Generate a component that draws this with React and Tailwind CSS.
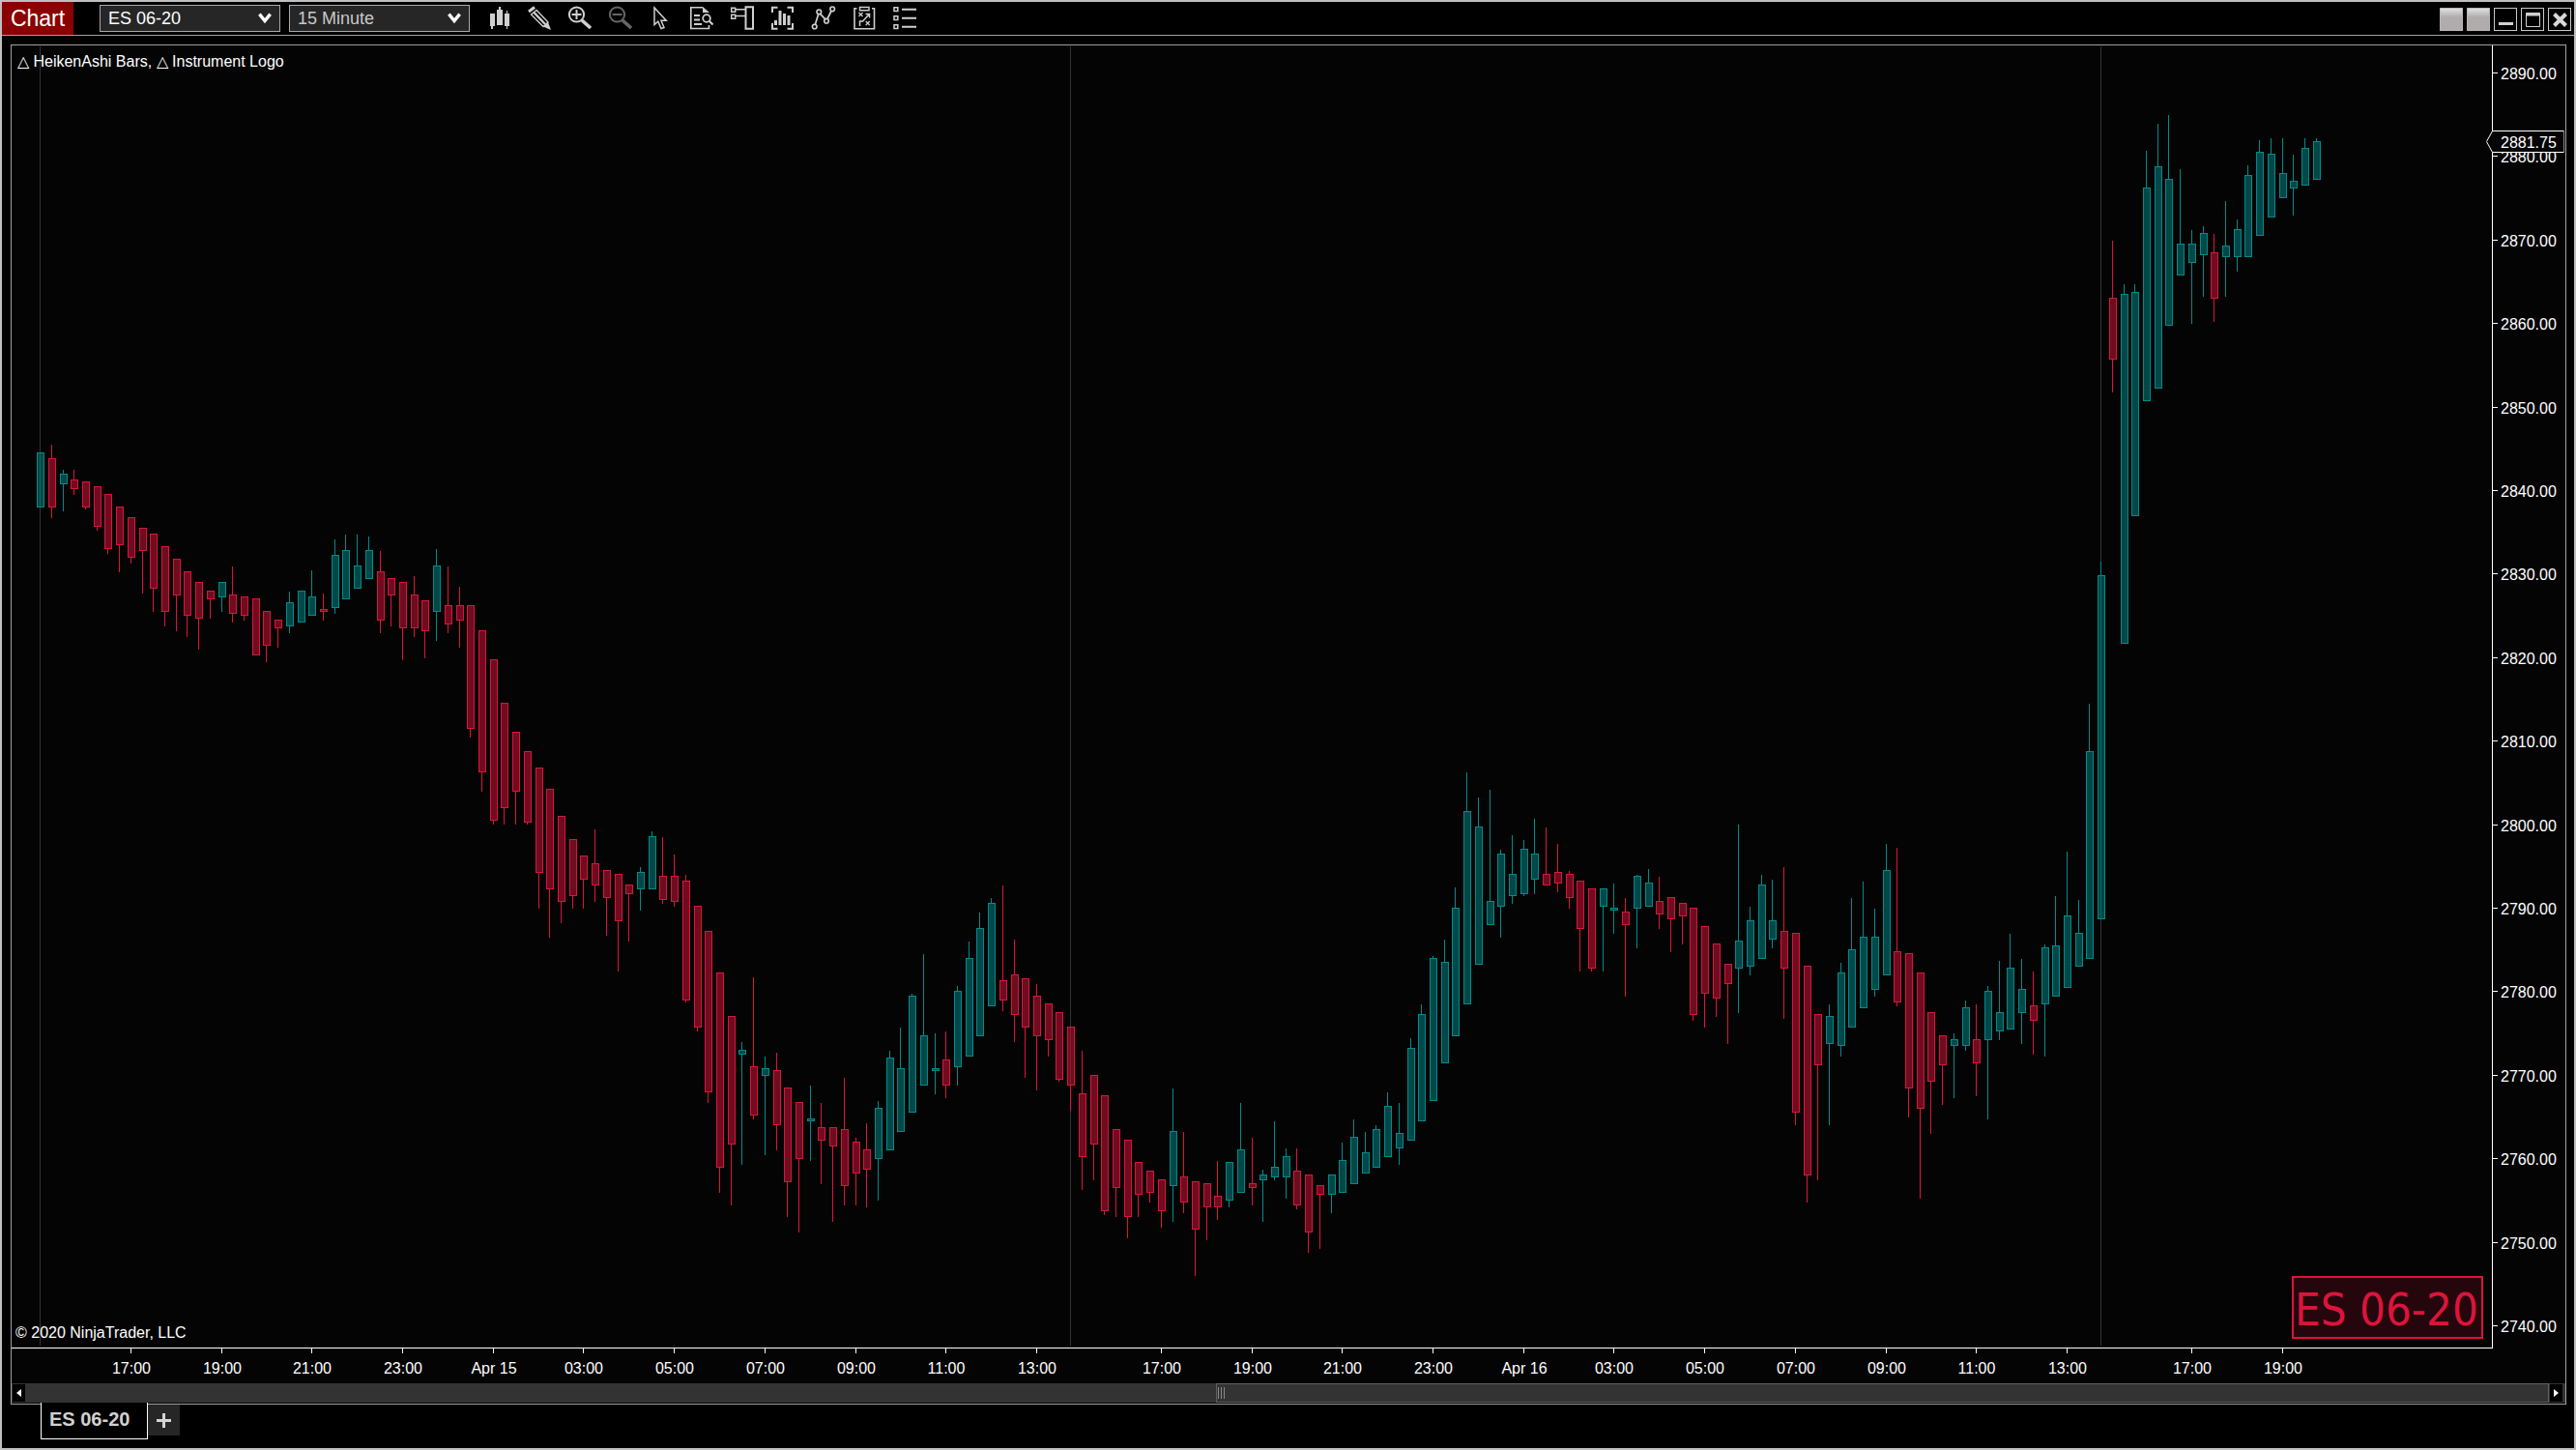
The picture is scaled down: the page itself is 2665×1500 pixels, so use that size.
import React, { useState } from "react";

// plot geometry, in chart units
const FIRST_X = 38.15;
const STEP = 11.7145;
const UP = "#008b8b";
const DOWN = "#dc143c";

// [direction, high, body top, body bottom, low]
const BARS = [
  ["u", 468, 468, 525, 525], ["d", 460, 474, 525, 536], ["u", 486, 490, 501, 529], ["d", 486, 496, 506, 512],
  ["d", 498, 498, 525, 527], ["d", 503, 503, 545, 549], ["d", 511, 511, 568, 573], ["d", 524, 524, 564, 592],
  ["d", 535, 535, 577, 583], ["d", 546, 546, 570, 614], ["d", 552, 552, 609, 633], ["d", 565, 565, 633, 648],
  ["d", 578, 578, 616, 653], ["d", 591, 591, 637, 659], ["d", 602, 602, 640, 672], ["d", 611, 611, 620, 640],
  ["u", 602, 602, 618, 633], ["d", 586, 615, 635, 644], ["d", 617, 617, 637, 642], ["d", 619, 619, 678, 678],
  ["d", 632, 632, 668, 685], ["d", 641, 641, 650, 670], ["u", 612, 623, 648, 655], ["u", 611, 611, 644, 644],
  ["u", 590, 617, 637, 637], ["d", 614, 630, 633, 642], ["u", 558, 574, 629, 635], ["u", 553, 569, 620, 620],
  ["u", 553, 585, 609, 609], ["u", 555, 569, 599, 599], ["d", 570, 591, 642, 655], ["d", 598, 598, 616, 648],
  ["d", 602, 602, 650, 683], ["d", 596, 615, 650, 659], ["d", 621, 621, 653, 681], ["u", 568, 585, 633, 663],
  ["d", 586, 626, 646, 655], ["d", 607, 626, 642, 670], ["d", 626, 626, 754, 763], ["d", 652, 652, 799, 819],
  ["d", 682, 682, 849, 853], ["d", 727, 727, 836, 853], ["d", 757, 757, 819, 853], ["d", 777, 777, 851, 853],
  ["d", 794, 794, 903, 940], ["d", 816, 816, 920, 970], ["d", 844, 844, 933, 955], ["d", 868, 868, 927, 940],
  ["d", 885, 885, 910, 940], ["d", 858, 893, 916, 933], ["d", 900, 900, 929, 968], ["d", 904, 904, 953, 1005],
  ["d", 915, 915, 925, 974], ["u", 897, 902, 920, 942], ["u", 860, 865, 920, 920], ["d", 866, 906, 931, 935],
  ["d", 884, 906, 933, 938], ["d", 905, 911, 1035, 1037], ["d", 937, 937, 1063, 1067], ["d", 963, 963, 1130, 1141],
  ["d", 1006, 1006, 1208, 1234], ["d", 1051, 1051, 1184, 1247], ["u", 1078, 1086, 1091, 1205], ["d", 1011, 1103, 1154, 1158],
  ["u", 1093, 1105, 1113, 1195], ["d", 1089, 1107, 1164, 1190], ["d", 1125, 1125, 1223, 1259], ["d", 1140, 1140, 1199, 1275],
  ["u", 1123, 1157, 1160, 1201], ["d", 1141, 1166, 1180, 1225], ["d", 1166, 1166, 1186, 1264], ["d", 1115, 1168, 1227, 1247],
  ["d", 1177, 1181, 1214, 1247], ["d", 1162, 1189, 1210, 1249], ["u", 1139, 1146, 1199, 1242], ["u", 1087, 1094, 1190, 1190],
  ["u", 1063, 1105, 1171, 1171], ["u", 1028, 1030, 1151, 1151], ["u", 987, 1071, 1123, 1123], ["u", 1069, 1105, 1108, 1132],
  ["d", 1067, 1096, 1123, 1136], ["u", 1020, 1025, 1104, 1123], ["u", 974, 991, 1093, 1093], ["u", 944, 960, 1072, 1072],
  ["u", 929, 934, 1041, 1041], ["d", 916, 1014, 1035, 1046], ["d", 972, 1008, 1050, 1078], ["d", 1012, 1012, 1063, 1115],
  ["d", 1018, 1030, 1072, 1128], ["d", 1038, 1038, 1076, 1093], ["d", 1047, 1047, 1117, 1119], ["d", 1062, 1062, 1123, 1149],
  ["d", 1087, 1131, 1197, 1231], ["d", 1112, 1112, 1184, 1221], ["d", 1133, 1133, 1253, 1257], ["d", 1168, 1168, 1229, 1259],
  ["d", 1179, 1179, 1259, 1281], ["d", 1202, 1202, 1236, 1259], ["d", 1211, 1211, 1234, 1244], ["d", 1220, 1220, 1253, 1270],
  ["u", 1126, 1170, 1227, 1264], ["d", 1171, 1217, 1244, 1255], ["d", 1222, 1222, 1272, 1320], ["d", 1224, 1224, 1249, 1283],
  ["d", 1201, 1237, 1249, 1262], ["u", 1202, 1202, 1242, 1249], ["u", 1141, 1189, 1234, 1234], ["d", 1177, 1224, 1229, 1247],
  ["u", 1210, 1215, 1221, 1264], ["u", 1160, 1207, 1218, 1221], ["u", 1188, 1196, 1218, 1240], ["d", 1188, 1211, 1247, 1251],
  ["d", 1215, 1215, 1275, 1296], ["d", 1226, 1226, 1236, 1292], ["u", 1215, 1215, 1236, 1255], ["u", 1182, 1200, 1234, 1234],
  ["u", 1158, 1176, 1225, 1225], ["u", 1171, 1192, 1214, 1214], ["u", 1164, 1168, 1208, 1208], ["u", 1130, 1144, 1197, 1197],
  ["u", 1141, 1172, 1188, 1205], ["u", 1074, 1084, 1180, 1180], ["u", 1039, 1049, 1160, 1160], ["u", 989, 991, 1139, 1139],
  ["u", 972, 995, 1100, 1100], ["u", 918, 939, 1072, 1072], ["u", 799, 839, 1039, 1039], ["u", 825, 855, 998, 998],
  ["u", 817, 932, 957, 957], ["u", 879, 883, 938, 970], ["u", 864, 904, 927, 935], ["u", 869, 878, 925, 927],
  ["u", 847, 883, 910, 925], ["d", 856, 904, 916, 916], ["d", 873, 902, 914, 923], ["d", 901, 904, 929, 940],
  ["d", 911, 911, 961, 1005], ["d", 919, 919, 1002, 1005], ["u", 919, 919, 938, 1005], ["u", 914, 939, 942, 966],
  ["d", 929, 943, 957, 1031], ["u", 905, 906, 940, 981], ["u", 899, 913, 938, 938], ["d", 907, 932, 946, 961],
  ["d", 928, 928, 951, 985], ["d", 934, 934, 948, 977], ["d", 939, 939, 1050, 1056], ["d", 958, 958, 1028, 1063],
  ["d", 976, 976, 1033, 1052], ["d", 997, 997, 1018, 1080], ["u", 853, 973, 1002, 1048], ["u", 938, 952, 1000, 1009],
  ["u", 905, 915, 992, 992], ["u", 910, 952, 972, 981], ["d", 897, 963, 1002, 1054], ["d", 965, 965, 1151, 1164],
  ["d", 999, 999, 1216, 1244], ["d", 1049, 1049, 1102, 1221], ["u", 1039, 1051, 1080, 1164], ["u", 996, 1006, 1082, 1093],
  ["u", 929, 982, 1063, 1063], ["u", 912, 969, 1043, 1043], ["u", 940, 969, 1024, 1031], ["u", 873, 900, 1009, 1009],
  ["d", 877, 984, 1037, 1041], ["d", 986, 986, 1126, 1156], ["d", 1006, 1006, 1147, 1240], ["d", 1047, 1047, 1119, 1173],
  ["d", 1071, 1071, 1102, 1143], ["u", 1069, 1075, 1082, 1136], ["u", 1035, 1042, 1082, 1087], ["d", 1039, 1075, 1100, 1134],
  ["u", 1020, 1025, 1076, 1158], ["u", 994, 1047, 1067, 1076], ["u", 966, 1001, 1065, 1065], ["u", 992, 1023, 1048, 1080],
  ["d", 1005, 1040, 1056, 1091], ["u", 977, 980, 1039, 1093], ["u", 927, 978, 1031, 1031], ["u", 881, 947, 1022, 1022],
  ["u", 931, 965, 1000, 1000], ["u", 728, 777, 992, 992], ["u", 581, 595, 951, 951], ["d", 249, 308, 372, 406],
  ["u", 294, 304, 666, 666], ["u", 294, 302, 534, 534], ["u", 156, 194, 415, 415], ["u", 128, 172, 402, 402],
  ["u", 119, 185, 337, 337], ["u", 175, 252, 285, 285], ["u", 238, 252, 272, 335], ["u", 234, 241, 264, 307],
  ["d", 242, 261, 309, 333], ["u", 208, 254, 266, 307], ["u", 227, 237, 266, 281], ["u", 171, 181, 266, 266],
  ["u", 145, 157, 244, 244], ["u", 143, 159, 225, 225], ["u", 143, 179, 205, 205], ["u", 160, 187, 195, 223],
  ["u", 143, 153, 192, 192], ["u", 143, 146, 186, 186],
];

const SESSIONS = [0, 91, 182];

// [bar index, label]
const TIMES = [
  [8, "17:00"], [16, "19:00"], [24, "21:00"], [32, "23:00"], [40, "Apr 15"], [48, "03:00"],
  [56, "05:00"], [64, "07:00"], [72, "09:00"], [80, "11:00"], [88, "13:00"],
  [99, "17:00"], [107, "19:00"], [115, "21:00"], [123, "23:00"], [131, "Apr 16"], [139, "03:00"],
  [147, "05:00"], [155, "07:00"], [163, "09:00"], [171, "11:00"], [179, "13:00"],
  [190, "17:00"], [198, "19:00"],
];

const PRICES = Array.from({ length: 16 }, (_, i) => 2890 - i * 10);

const barX = (i) => Math.round(FIRST_X + i * STEP);
const priceY = (p) => Math.round(75 + (2890 - p) * 8.64);

function Bar({ i, bar }) {
  const [dir, high, top, bottom, low] = bar;
  const color = dir === "u" ? UP : DOWN;
  const x = barX(i);
  return (
    <g>
      {high < top && <rect x={x + 3} y={high} width="1" height={top - high} fill={color} />}
      {low > bottom && <rect x={x + 3} y={bottom} width="1" height={low - bottom} fill={color} />}
      <rect
        x={x + 0.5}
        y={top + 0.5}
        width="7"
        height={bottom - top - 1}
        fill={color}
        fillOpacity="0.5"
        stroke={color}
      />
    </g>
  );
}

function Chart() {
  return (
    <svg
      viewBox="12 47 2642 1384"
      className="block w-full flex-1 min-h-0 bg-[#040404] text-[16px]"
      fill="#ffffff"
      shapeRendering="crispEdges"
      role="img"
      aria-label="ES 06-20 15 minute chart"
    >
      {SESSIONS.map((i) => (
        <rect key={i} x={barX(i) + 3} y="48" width="1" height="1344" fill="#333333" />
      ))}

      {BARS.map((bar, i) => (
        <Bar key={i} i={i} bar={bar} />
      ))}

      <text x="18" y="69">△ HeikenAshi Bars, △ Instrument Logo</text>
      <text x="16" y="1384">© 2020 NinjaTrader, LLC</text>

      {/* axes */}
      <rect x="2578" y="47" width="1" height="1348" />
      <rect x="12" y="1394" width="2567" height="1" />
      {PRICES.map((p) => (
        <g key={p}>
          <rect x="2579" y={priceY(p)} width="5" height="1" />
          <text x="2587" y={priceY(p) + 7}>{p.toFixed(2)}</text>
        </g>
      ))}
      {TIMES.map(([i, label]) => (
        <g key={i}>
          <rect x={barX(i) + 3} y="1395" width="1" height="5" />
          <text x={barX(i) + 4} y="1421" textAnchor="middle">{label}</text>
        </g>
      ))}

      {/* last price marker */}
      <path
        d="M2578.5 135.5H2652.5V157.5H2578.5L2572.5 146.5Z"
        fill="#040404"
        stroke="#ffffff"
        shapeRendering="auto"
      />
      <path d="M2652.5 135V158" stroke="#8a8a8a" />
      <text x="2587" y="153">2881.75</text>

      {/* instrument logo */}
      <rect x="2372" y="1321" width="196" height="63" fill="#25060c" stroke={DOWN} strokeWidth="2" />
      <text
        x="2374"
        y="1371"
        fill={DOWN}
        className="font-['DejaVu_Sans_Condensed','Noto_Sans',sans-serif] text-[47px]"
      >
        ES 06-20
      </text>
    </svg>
  );
}

const TOOLS = [
  {
    name: "Chart style",
    icon: (
      <g fill="currentColor" stroke="none">
        <path d="M4 8h5v13H7v3H5v-3H4zM11 4h2V1h2v3h2v16h-6zM19 8h2V5h1v3h2v13h-2v3h-1v-3h-2z" />
      </g>
    ),
  },
  {
    name: "Drawing tools",
    icon: (
      <>
        <path d="M2 6L8 1.5" strokeWidth="3" />
        <path d="M4.5 9L10 4.5L22 17L17 21.5Z" strokeWidth="1.3" />
        <path d="M7.5 7L19 19" strokeWidth="2.4" />
        <path d="M17 21.5L22 17L25 25Z" fill="currentColor" stroke="none" />
      </>
    ),
  },
  {
    name: "Zoom in",
    icon: (
      <>
        <circle cx="9.5" cy="9" r="7.6" />
        <path d="M9.5 4v10M4.5 9h10" />
        <path d="M15 15L24 23" strokeWidth="3.6" />
      </>
    ),
  },
  {
    name: "Zoom out",
    dim: true,
    icon: (
      <>
        <circle cx="9.5" cy="9" r="7.6" />
        <path d="M4.5 9h10" />
        <path d="M15 15L24 23" strokeWidth="3.6" />
      </>
    ),
  },
  {
    name: "Cursor",
    icon: <path d="M6 2V19.5L9.8 16.2L13 23.5L16 22.5L13 15.2H18.2Z" strokeWidth="1.5" />,
  },
  {
    name: "Data box",
    icon: (
      <>
        <path d="M20.5 20v3.5H1.8V1.8H14" strokeWidth="1.6" />
        <path d="M14 1v6h7z" fill="currentColor" stroke="none" />
        <path d="M5 10h6M5 14.5h6M5 19h8" />
        <circle cx="18" cy="13" r="3.8" strokeWidth="1.8" />
        <path d="M20.5 15.5l4 4" strokeWidth="2.2" />
      </>
    ),
  },
  {
    name: "Chart trader",
    icon: (
      <>
        <path d="M1.7 2.2h4v4h-4zM1.7 9.2h4v4h-4zM6 3.7h10M6 10.5h10" strokeWidth="1.5" />
        <path d="M16.5 1.2h7.5v22.5h-7.5z" />
      </>
    ),
  },
  {
    name: "Fit to screen",
    icon: (
      <>
        <path d="M7.5 1.7H2V7M17.5 1.7H23V7M7.5 23.7H2V18M17.5 23.7H23V18" />
        <path d="M5.5 15v5M10 5v15M14.5 8v12M19 10v10" strokeWidth="3" />
      </>
    ),
  },
  {
    name: "Indicators",
    icon: (
      <>
        <path d="M4.3 19.5L7.7 8.5M9.5 8.3L14.8 13.8M17 13.5L21.2 5" strokeWidth="1.7" />
        <circle cx="3.7" cy="21.5" r="2.3" strokeWidth="1.6" />
        <circle cx="8.3" cy="6.3" r="2.3" strokeWidth="1.6" />
        <circle cx="16" cy="15.7" r="2.3" strokeWidth="1.6" />
        <circle cx="22.2" cy="3.3" r="2.3" strokeWidth="1.6" />
      </>
    ),
  },
  {
    name: "Strategies",
    icon: (
      <>
        <path d="M5.5 2.7H3v21h20.5v-21H21" strokeWidth="1.6" />
        <path d="M8.5 1.5h9.5v3.2H8.5z" strokeWidth="1.4" />
        <path d="M7.5 7l4 4M11.5 7l-4 4M14.7 16l4 4M18.7 16l-4 4" strokeWidth="1.3" />
        <path d="M8.5 21v-5h3L18 9M14.5 8.5h4v4" strokeWidth="1.5" />
      </>
    ),
  },
  {
    name: "Properties",
    icon: (
      <>
        <path d="M2 1.8h3.8v3.8H2zM2 10.7h3.8v3.8H2zM2 19.7h3.8v3.8H2z" strokeWidth="1.5" />
        <path d="M10 3.8h15M10 12.7h15M10 21.7h15" />
      </>
    ),
  },
];

function Picker({ label, value, onChange, options, className }) {
  return (
    <div className="relative">
      <select
        aria-label={label}
        value={value}
        onChange={(e) => onChange(e.target.value)}
        className={
          "block w-[187px] h-7 appearance-none border border-[#a9a9a9] bg-[#262626] pl-2 text-[18px] leading-6 " +
          className
        }
      >
        {options.map((o) => (
          <option key={o}>{o}</option>
        ))}
      </select>
      <svg
        viewBox="0 0 14 12"
        className="absolute right-[9px] top-2 w-[14px] h-3 pointer-events-none"
        fill="none"
        stroke="#ffffff"
        strokeWidth="3.4"
      >
        <path d="M1.4 1.6L7 8.6L12.6 1.6" />
      </svg>
    </div>
  );
}

function WindowButtons() {
  const base = "w-6 h-6 border border-[#c8c8c8] flex items-center justify-center";
  return (
    <div className="ml-auto flex gap-1 pr-[3px] pt-px">
      <button type="button" aria-label="Link instrument" className="w-6 h-6 border border-[#b5b5bb] bg-linear-to-b from-[#e0e0e0] to-[#b0acac] to-40%" />
      <button type="button" aria-label="Link interval" className="w-6 h-6 border border-[#b5b5bb] bg-linear-to-b from-[#e0e0e0] to-[#b0acac] to-40%" />
      <button type="button" aria-label="Minimize" className={base}>
        <svg viewBox="0 0 22 22" className="w-[22px] h-[22px]" fill="#d0d0d0">
          <rect x="4" y="14" width="15" height="3" />
        </svg>
      </button>
      <button type="button" aria-label="Maximize" className={base}>
        <svg viewBox="0 0 22 22" className="w-[22px] h-[22px]" fill="none" stroke="#d0d0d0">
          <path d="M4.5 4.5h14v14h-14z" />
          <path d="M4 6h15" strokeWidth="3" />
        </svg>
      </button>
      <button type="button" aria-label="Close" className={base}>
        <svg viewBox="0 0 22 22" className="w-[22px] h-[22px]" fill="none" stroke="#d8d8d8" strokeWidth="4">
          <path d="M5.5 5.5l12 12M17.5 5.5l-12 12" />
        </svg>
      </button>
    </div>
  );
}

export default function App() {
  const [instrument, setInstrument] = useState("ES 06-20");
  const [interval, setBarInterval] = useState("15 Minute");

  return (
    <div className="h-screen flex flex-col border-2 border-[#bfbfbf] bg-black text-white font-['Liberation_Sans',Arial,sans-serif]">
      <header className="flex h-[35px] shrink-0 items-center border-b border-[#a0a0a0]">
        <h1 className="flex h-full w-[74px] items-center justify-center bg-[#8b0000] text-[23px] leading-none">
          Chart
        </h1>
        <div className="ml-[27px] flex gap-[9px]">
          <Picker
            label="Instrument"
            value={instrument}
            onChange={setInstrument}
            options={["ES 06-20", "NQ 06-20", "YM 06-20"]}
            className="text-white"
          />
          <Picker
            label="Interval"
            value={interval}
            onChange={setBarInterval}
            options={["5 Minute", "15 Minute", "60 Minute"]}
            className="text-[#c8c8c8]"
          />
        </div>
        <div className="ml-[9px] flex">
          {TOOLS.map((t) => (
            <button
              key={t.name}
              type="button"
              aria-label={t.name}
              className={"flex w-[42px] justify-center " + (t.dim ? "text-[#666666]" : "text-[#d0d0d0]")}
            >
              <svg viewBox="0 0 26 26" className="w-[26px] h-[26px]" fill="none" stroke="currentColor" strokeWidth="2">
                {t.icon}
              </svg>
            </button>
          ))}
        </div>
        <WindowButtons />
      </header>

      <main className="mt-[9px] ml-[9px] mr-2 flex min-h-0 flex-1 flex-col border border-[#a0a0a0]">
        <Chart />
        <div className="mb-px flex h-5 shrink-0 bg-[#333333] px-px">
          <button type="button" aria-label="Scroll left" className="my-px flex w-[13px] items-center justify-center bg-black">
            <svg viewBox="0 0 5 8" className="w-[5px] h-2" fill="#ffffff">
              <path d="M5 0v8L0 4z" />
            </svg>
          </button>
          <div className="flex flex-1">
            <div className="w-[47.2%]" />
            <div className="flex flex-1 items-center border border-[#606060] pl-px">
              <div className="flex h-3 w-[7px] justify-center border-x border-[#8a8a8a]">
                <div className="w-px bg-[#8a8a8a]" />
              </div>
            </div>
          </div>
          <button type="button" aria-label="Scroll right" className="my-px ml-px mr-[2px] flex w-[13px] items-center justify-center bg-black">
            <svg viewBox="0 0 5 8" className="w-[5px] h-2" fill="#ffffff">
              <path d="M0 0v8l5-4z" />
            </svg>
          </button>
        </div>
      </main>

      <nav className="flex h-[45px] shrink-0 items-start pl-10">
        <button
          type="button"
          className="relative -mt-[2px] h-[38px] w-[111px] border border-t-0 border-white bg-black pb-1 pl-2 text-left text-[20px] leading-6 font-bold text-[#d0d0d0]"
        >
          ES 06-20
        </button>
        <button type="button" aria-label="New tab" className="flex h-8 w-[33px] items-center justify-center bg-[#262626]">
          <svg viewBox="0 0 15 15" className="w-[15px] h-[15px]" fill="#d4d4d4">
            <path d="M6 0h3v6h6v3H9v6H6V9H0V6h6z" />
          </svg>
        </button>
      </nav>
    </div>
  );
}
